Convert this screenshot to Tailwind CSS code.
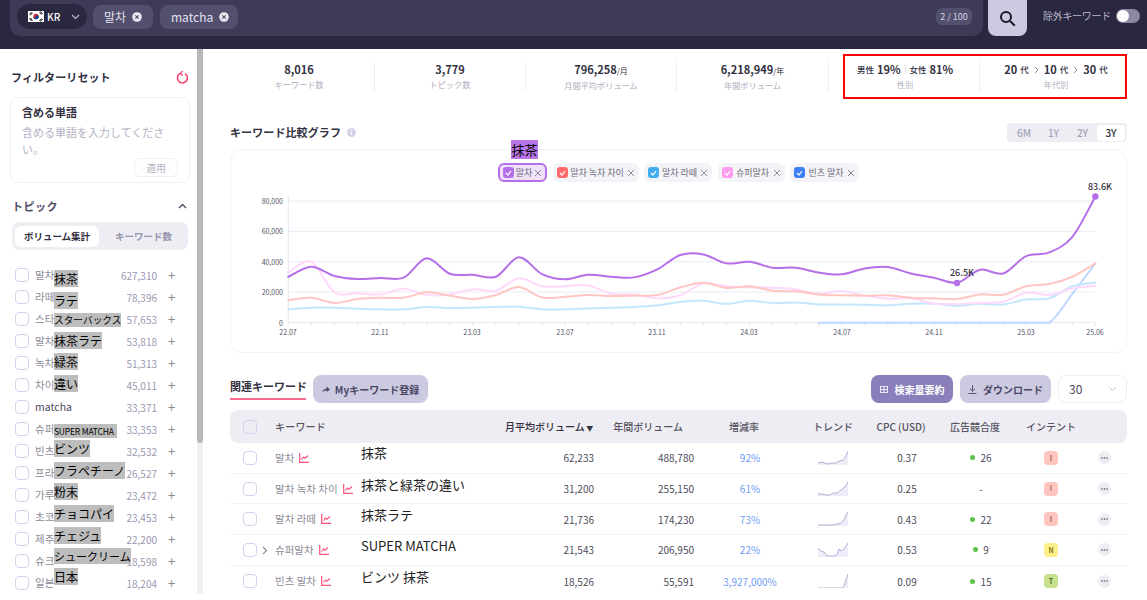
<!DOCTYPE html>
<html lang="ja">
<head>
    <meta charset="UTF-8">
    <title>キーワード比較</title>
    <script src="https://cdn.jsdelivr.net/npm/@tailwindcss/browser@4"></script>
</head>
<body class="w-[1147px] h-[600px] overflow-hidden bg-white font-['Noto_Sans_CJK_JP','Noto_Sans',sans-serif] text-[#33313f]">

<!-- top search bar -->
<header class="h-[49px] bg-[#2a2740] flex items-start pl-[10px]">
    <div class="w-[973px] h-[36px] bg-[#3e3a58] rounded-b-[10px] flex items-center pl-[7px] pr-[11px] gap-[6px] pb-[3px]">
        <div class="w-[70px] h-[25px] rounded-full bg-[#2a2740] flex items-center pl-[11px] text-white text-[10px] font-medium">
            <svg width="16" height="11" viewBox="0 0 16 11" class="mr-[2px]"><rect width="16" height="11" fill="#fff"/><circle cx="8" cy="5.500" r="2.700" fill="#cd2e3a"/><path d="M5.300 5.500a2.700 2.700 0 0 0 5.400 0c0-.7-.6-1.300-1.350-1.300S8 4.800 8 5.500 7.400 6.800 6.650 6.800 5.300 6.200 5.300 5.500z" fill="#0047a0"/><path d="M1.500 3.500l2-2.500M2.500 4.300l2-2.500M11.500 1l2 2.500M12.500 .5l2 2.500M1.500 7.500l2 2.500M2.500 7l2 2.500M11.500 10l2-2.500M12.500 10.500l2-2.500" stroke="#111" stroke-width="1"/></svg>
            <span class="ml-[1px]">KR</span>
            <svg width="9" height="6" viewBox="0 0 9 6" class="ml-[11px]" fill="none" stroke="#b9b7c8" stroke-width="1.200"><path d="M1 1l3.500 3.500L8 1"/></svg>
        </div>
        <div class="w-[60px] h-[24px] rounded-lg bg-[#534f6e] flex items-center pl-[11px] gap-[6px] text-[#e4e2ee] text-[12px]">
            <span>말차</span>
            <svg width="10" height="10" viewBox="0 0 10 10"><circle cx="5" cy="5" r="4.800" fill="#eceaf4"/><path d="M3.300 3.300l3.400 3.400M6.700 3.300l-3.400 3.400" stroke="#534f6e" stroke-width="1.200"/></svg>
        </div>
        <div class="w-[78px] h-[24px] rounded-lg bg-[#534f6e] flex items-center pl-[11px] gap-[6px] text-[#e4e2ee] text-[12px] ml-[1px]">
            <span>matcha</span>
            <svg width="10" height="10" viewBox="0 0 10 10"><circle cx="5" cy="5" r="4.800" fill="#eceaf4"/><path d="M3.300 3.300l3.400 3.400M6.700 3.300l-3.400 3.400" stroke="#534f6e" stroke-width="1.200"/></svg>
        </div>
        <div class="ml-auto w-[36px] h-[17px] rounded-md bg-[#534f6e] text-[#d6d4e2] text-[9px] flex items-center justify-center">2 / 100</div>
    </div>
    <div class="ml-[5px] w-[39px] h-[36px] bg-[#cccae0] rounded-b-lg flex items-center justify-center">
        <svg width="17" height="17" viewBox="0 0 17 17" fill="none" stroke="#1c1b26" stroke-width="2"><circle cx="7" cy="7" r="5"/><path d="M10.800 10.800l5 5"/></svg>
    </div>
    <div class="ml-[16px] h-[31px] flex items-center text-[10px] text-[#b9b7c8] whitespace-nowrap w-[67px] tracking-[-0.3px]">除外キーワード</div>
    <div class="ml-[6px] mt-[9px] w-[24px] h-[14px] rounded-full bg-[#8b88a3] flex items-center pl-[1px]">
        <div class="w-[12px] h-[12px] rounded-full bg-white"></div>
    </div>
</header>

<div class="flex h-[551px]">
    <!-- filter sidebar -->
    <aside class="w-[197px] shrink-0 pl-[10px] pr-[7px]">
        <div class="flex items-center justify-between h-[16px] mt-[20px] pl-[1px] pr-[1px]">
            <span class="text-[11px] font-bold tracking-[0.1px] whitespace-nowrap">フィルターリセット</span>
            <svg width="13" height="14" viewBox="0 0 13 14" fill="none" stroke="#ff3b66" stroke-width="1.500"><path d="M4.200 3.400a5 5 0 1 0 4.800 .2"/><path d="M6.800 .8L4.200 3.400l2.600 2" stroke-width="1.200"/></svg>
        </div>
        <div class="mt-[12px] w-[180px] h-[86px] border border-[#f0eff5] rounded-lg pt-[6px] pl-[11px] pr-[8px] relative">
            <div class="text-[11px] font-bold leading-[17px]">含める単語</div>
            <div class="text-[11px] leading-[17px] text-[#b3b1c4] mt-[3px]">含める単語を入力してください。</div>
            <div class="absolute right-[11px] bottom-[5px] w-[44px] h-[19px] border border-[#eeedf3] rounded-md text-[10px] text-[#b5b3c2] flex items-center justify-center">適用</div>
        </div>
        <div class="flex items-center justify-between mt-[15px] h-[16px] pl-[2px] pr-[3px]">
            <span class="text-[11px] font-bold text-[#4f4d66] tracking-[0.5px]">トピック</span>
            <svg width="9" height="6" viewBox="0 0 9 6" fill="none" stroke="#4f4d66" stroke-width="1.300"><path d="M1 5l3.500-3.500L8 5"/></svg>
        </div>
        <div class="mt-[8px] ml-[2px] w-[176px] h-[28px] rounded-lg bg-[#eeedf4] flex items-center pl-[3px] text-[9.500px] font-bold">
            <div class="w-[84px] h-[21px] rounded-md bg-white flex items-center justify-center">ボリューム集計</div>
            <div class="flex-1 text-center text-[#9795ab]">キーワード数</div>
        </div>

        <ul class="mt-[14px] -ml-[10px] text-[10px]">
            <li class="relative h-[22px] flex items-center pl-[15px]">
                <span class="w-[14px] h-[14px] rounded-[4px] border border-[#d5d0ec]"></span>
                <span class="ml-[6px] text-[#8d8b98] text-[10.500px]">말차</span>
                <span class="absolute right-[33px] text-[#9a98b0]">627,310</span>
                <span class="absolute left-[168px] text-[#8d8b98] text-[13px]">+</span>
                <span class="absolute left-[54px] top-[6px] bg-[#bdbdbd] text-black text-[12px] leading-[17px]">抹茶</span>
            </li>
            <li class="relative h-[22px] flex items-center pl-[15px]">
                <span class="w-[14px] h-[14px] rounded-[4px] border border-[#d5d0ec]"></span>
                <span class="ml-[6px] text-[#8d8b98] text-[10.500px]">라떼</span>
                <span class="absolute right-[33px] text-[#9a98b0]">78,396</span>
                <span class="absolute left-[168px] text-[#8d8b98] text-[13px]">+</span>
                <span class="absolute left-[54px] top-[6px] bg-[#bdbdbd] text-black text-[12px] leading-[17px]">ラテ</span>
            </li>
            <li class="relative h-[22px] flex items-center pl-[15px]">
                <span class="w-[14px] h-[14px] rounded-[4px] border border-[#d5d0ec]"></span>
                <span class="ml-[6px] text-[#8d8b98] text-[10.500px]">스타</span>
                <span class="absolute right-[33px] text-[#9a98b0]">57,653</span>
                <span class="absolute left-[168px] text-[#8d8b98] text-[13px]">+</span>
                <span class="absolute left-[54px] top-[5px] bg-[#bdbdbd] text-black text-[9.700px] leading-[14px] whitespace-nowrap">スターバックス</span>
            </li>
            <li class="relative h-[22px] flex items-center pl-[15px]">
                <span class="w-[14px] h-[14px] rounded-[4px] border border-[#d5d0ec]"></span>
                <span class="ml-[6px] text-[#8d8b98] text-[10.500px]">말차</span>
                <span class="absolute right-[33px] text-[#9a98b0]">53,818</span>
                <span class="absolute left-[168px] text-[#8d8b98] text-[13px]">+</span>
                <span class="absolute left-[54px] top-[2px] bg-[#bdbdbd] text-black text-[12px] leading-[17px] whitespace-nowrap">抹茶ラテ</span>
            </li>
            <li class="relative h-[22px] flex items-center pl-[15px]">
                <span class="w-[14px] h-[14px] rounded-[4px] border border-[#d5d0ec]"></span>
                <span class="ml-[6px] text-[#8d8b98] text-[10.500px]">녹차</span>
                <span class="absolute right-[33px] text-[#9a98b0]">51,313</span>
                <span class="absolute left-[168px] text-[#8d8b98] text-[13px]">+</span>
                <span class="absolute left-[54px] top-[1px] bg-[#bdbdbd] text-black text-[12px] leading-[17px]">緑茶</span>
            </li>
            <li class="relative h-[22px] flex items-center pl-[15px]">
                <span class="w-[14px] h-[14px] rounded-[4px] border border-[#d5d0ec]"></span>
                <span class="ml-[6px] text-[#8d8b98] text-[10.500px]">차이</span>
                <span class="absolute right-[33px] text-[#9a98b0]">45,011</span>
                <span class="absolute left-[168px] text-[#8d8b98] text-[13px]">+</span>
                <span class="absolute left-[54px] top-[1px] bg-[#bdbdbd] text-black text-[12px] leading-[17px]">違い</span>
            </li>
            <li class="relative h-[22px] flex items-center pl-[15px]">
                <span class="w-[14px] h-[14px] rounded-[4px] border border-[#d5d0ec]"></span>
                <span class="ml-[6px] text-[#4d4b5a] text-[10.500px]">matcha</span>
                <span class="absolute right-[33px] text-[#9a98b0]">33,371</span>
                <span class="absolute left-[168px] text-[#8d8b98] text-[13px]">+</span>
            </li>
            <li class="relative h-[22px] flex items-center pl-[15px]">
                <span class="w-[14px] h-[14px] rounded-[4px] border border-[#d5d0ec]"></span>
                <span class="ml-[6px] text-[#8d8b98] text-[10.500px]">슈퍼</span>
                <span class="absolute right-[33px] text-[#9a98b0]">33,353</span>
                <span class="absolute left-[168px] text-[#8d8b98] text-[13px]">+</span>
                <span class="absolute left-[54px] top-[6px] w-[63px] bg-[#bdbdbd] text-black text-[8.500px] leading-[14px] whitespace-nowrap tracking-[-0.2px]">SUPER MATCHA</span>
            </li>
            <li class="relative h-[22px] flex items-center pl-[15px]">
                <span class="w-[14px] h-[14px] rounded-[4px] border border-[#d5d0ec]"></span>
                <span class="ml-[6px] text-[#8d8b98] text-[10.500px]">빈츠</span>
                <span class="absolute right-[33px] text-[#9a98b0]">32,532</span>
                <span class="absolute left-[168px] text-[#8d8b98] text-[13px]">+</span>
                <span class="absolute left-[54px] top-[0px] bg-[#bdbdbd] text-black text-[12px] leading-[17px] whitespace-nowrap">ビンツ</span>
            </li>
            <li class="relative h-[22px] flex items-center pl-[15px]">
                <span class="w-[14px] h-[14px] rounded-[4px] border border-[#d5d0ec]"></span>
                <span class="ml-[6px] text-[#8d8b98] text-[10.500px]">프라</span>
                <span class="absolute right-[33px] text-[#9a98b0]">26,527</span>
                <span class="absolute left-[168px] text-[#8d8b98] text-[13px]">+</span>
                <span class="absolute left-[54px] top-[0px] bg-[#bdbdbd] text-black text-[12px] leading-[17px] whitespace-nowrap">フラペチーノ</span>
            </li>
            <li class="relative h-[22px] flex items-center pl-[15px]">
                <span class="w-[14px] h-[14px] rounded-[4px] border border-[#d5d0ec]"></span>
                <span class="ml-[6px] text-[#8d8b98] text-[10.500px]">가루</span>
                <span class="absolute right-[33px] text-[#9a98b0]">23,472</span>
                <span class="absolute left-[168px] text-[#8d8b98] text-[13px]">+</span>
                <span class="absolute left-[54px] -top-[1px] bg-[#bdbdbd] text-black text-[12px] leading-[17px]">粉末</span>
            </li>
            <li class="relative h-[22px] flex items-center pl-[15px]">
                <span class="w-[14px] h-[14px] rounded-[4px] border border-[#d5d0ec]"></span>
                <span class="ml-[6px] text-[#8d8b98] text-[10.500px]">초코</span>
                <span class="absolute right-[33px] text-[#9a98b0]">23,453</span>
                <span class="absolute left-[168px] text-[#8d8b98] text-[13px]">+</span>
                <span class="absolute left-[54px] -top-[1px] bg-[#bdbdbd] text-black text-[12px] leading-[17px] whitespace-nowrap">チョコパイ</span>
            </li>
            <li class="relative h-[22px] flex items-center pl-[15px]">
                <span class="w-[14px] h-[14px] rounded-[4px] border border-[#d5d0ec]"></span>
                <span class="ml-[6px] text-[#8d8b98] text-[10.500px]">제주</span>
                <span class="absolute right-[33px] text-[#9a98b0]">22,200</span>
                <span class="absolute left-[168px] text-[#8d8b98] text-[13px]">+</span>
                <span class="absolute left-[54px] -top-[1px] bg-[#bdbdbd] text-black text-[12px] leading-[17px] whitespace-nowrap">チェジュ</span>
            </li>
            <li class="relative h-[22px] flex items-center pl-[15px]">
                <span class="w-[14px] h-[14px] rounded-[4px] border border-[#d5d0ec]"></span>
                <span class="ml-[6px] text-[#8d8b98] text-[10.500px]">슈크</span>
                <span class="absolute right-[33px] text-[#9a98b0]">18,598</span>
                <span class="absolute left-[168px] text-[#8d8b98] text-[13px]">+</span>
                <span class="absolute left-[54px] -top-[2px] bg-[#bdbdbd] text-black text-[11px] leading-[16px] whitespace-nowrap">シュークリーム</span>
            </li>
            <li class="relative h-[22px] flex items-center pl-[15px]">
                <span class="w-[14px] h-[14px] rounded-[4px] border border-[#d5d0ec]"></span>
                <span class="ml-[6px] text-[#8d8b98] text-[10.500px]">일본</span>
                <span class="absolute right-[33px] text-[#9a98b0]">18,204</span>
                <span class="absolute left-[168px] text-[#8d8b98] text-[13px]">+</span>
                <span class="absolute left-[54px] -top-[4px] bg-[#bdbdbd] text-black text-[12px] leading-[17px]">日本</span>
            </li>
        </ul>
    </aside>

    <!-- sidebar scrollbar -->
    <div class="w-[6px] shrink-0 h-[545px] bg-[#f0f0f0]">
        <div class="w-[6px] h-[394px] bg-[#b8b8b8] rounded-b-[3px]"></div>
    </div>

    <main class="w-[944px] pl-[27px] pr-[20px]">
        <!-- summary numbers -->
        <div class="flex items-center mt-[5px] h-[45px] -ml-[6px]">
            <div class="w-[151px] h-[29px] border-r border-[#eeedf3] text-center flex flex-col justify-center">
                <div class="text-[11px] font-bold leading-[15px]">8,016</div>
                <div class="text-[8.200px] text-[#b0aec0] leading-[14px]">キーワード数</div>
            </div>
            <div class="w-[151px] h-[29px] border-r border-[#eeedf3] text-center flex flex-col justify-center">
                <div class="text-[11px] font-bold leading-[15px]">3,779</div>
                <div class="text-[8.200px] text-[#b0aec0] leading-[14px]">トピック数</div>
            </div>
            <div class="w-[151px] h-[29px] border-r border-[#eeedf3] text-center flex flex-col justify-center">
                <div class="text-[11px] font-bold leading-[15px]">796,258<span class="text-[8px] font-normal">/月</span></div>
                <div class="text-[8.200px] text-[#b0aec0] leading-[14px]">月間平均ボリューム</div>
            </div>
            <div class="w-[152px] h-[29px] border-r border-[#eeedf3] text-center flex flex-col justify-center">
                <div class="text-[11px] font-bold leading-[15px]">6,218,949<span class="text-[8px] font-normal">/年</span></div>
                <div class="text-[8.200px] text-[#b0aec0] leading-[14px]">年間ボリューム</div>
            </div>
            <div class="ml-[14px] w-[284px] h-[45px] border-2 border-[#f00] flex items-center">
                <div class="w-[135px] h-[29px] border-r border-[#eeedf3] pr-[14px] text-center flex flex-col justify-center">
                    <div class="flex items-center justify-center text-[11px] font-bold leading-[15px] whitespace-nowrap">
                        <span class="text-[8.500px] font-medium mr-[3px]">男性</span>19%
                        <span class="w-px h-[9px] bg-[#e4e3ec] mx-[4px]"></span>
                        <span class="text-[8.500px] font-medium mr-[3px]">女性</span>81%
                    </div>
                    <div class="text-[8.200px] text-[#b0aec0] leading-[14px]">性別</div>
                </div>
                <div class="flex-1 h-[29px] pl-[7px] text-center flex flex-col justify-center">
                    <div class="flex items-center justify-center text-[11px] font-bold leading-[15px] whitespace-nowrap">
                        20<span class="text-[8.500px] font-medium ml-[3px]">代</span>
                        <svg width="5" height="8" viewBox="0 0 5 8" fill="none" stroke="#8d8b98" class="mx-[5px]"><path d="M1 1l3 3-3 3"/></svg>
                        10<span class="text-[8.500px] font-medium ml-[3px]">代</span>
                        <svg width="5" height="8" viewBox="0 0 5 8" fill="none" stroke="#8d8b98" class="mx-[5px]"><path d="M1 1l3 3-3 3"/></svg>
                        30<span class="text-[8.500px] font-medium ml-[3px]">代</span>
                    </div>
                    <div class="text-[8.200px] text-[#b0aec0] leading-[14px]">年代別</div>
                </div>
            </div>
        </div>

        <!-- graph title and range -->
        <div class="flex items-center justify-between mt-[24px] h-[19px]">
            <div class="flex items-center gap-[6px]">
                <span class="text-[11px] font-bold tracking-[0.1px]">キーワード比較グラフ</span>
                <svg width="9" height="9" viewBox="0 0 9 9"><circle cx="4.500" cy="4.500" r="4.500" fill="#d5d3e8"/><path d="M4.500 4v2.800M4.500 2v1" stroke="#fff" stroke-width="1"/></svg>
            </div>
            <div class="w-[120px] h-[19px] rounded bg-[#eeedf4] flex items-center text-[10px] font-medium text-[#a3a1b5] pl-[2px]">
                <span class="w-[30px] text-center">6M</span>
                <span class="w-[29px] text-center">1Y</span>
                <span class="w-[29px] text-center">2Y</span>
                <span class="w-[28px] h-[16px] leading-[16px] rounded bg-white text-center text-[#33313f]">3Y</span>
            </div>
        </div>

        <!-- graph card -->
        <div class="mt-[7px] w-[897px] h-[204px] border border-[#f3f2f7] rounded-xl pt-[13px]">
            <div class="flex justify-center gap-[5.500px] h-[19px] text-[9px] text-[#6d6b78] whitespace-nowrap">
                <div class="relative w-[49px] h-[19px] px-[3px] border-2 border-[#b56fe8] bg-[#f0e2fb] rounded-md flex items-center justify-between">
                    <span class="w-[11px] h-[11px] rounded-[3px] bg-[#b56fe8] flex items-center justify-center"><svg width="7" height="6" viewBox="0 0 7 6" fill="none" stroke="#fff" stroke-width="1.200"><path d="M1 3l2 2 3-4"/></svg></span>
                    <span>말차</span>
                    <svg width="8" height="8" viewBox="0 0 8 8" fill="none" stroke="#8d8b98"><path d="M1 1l6 6M7 1L1 7"/></svg>
                    <span class="absolute left-[11px] -top-[25px] w-[27px] h-[19px] bg-[#b875e8] text-black text-[13px] leading-[19px] text-center">抹茶</span>
                </div>
                <div class="w-[86px] h-[19px] px-[4px] bg-[#f4f4f8] rounded-md flex items-center justify-between">
                    <span class="w-[11px] h-[11px] rounded-[3px] bg-[#ff6b6b] flex items-center justify-center"><svg width="7" height="6" viewBox="0 0 7 6" fill="none" stroke="#fff" stroke-width="1.200"><path d="M1 3l2 2 3-4"/></svg></span>
                    <span>말차 녹차 차이</span>
                    <svg width="8" height="8" viewBox="0 0 8 8" fill="none" stroke="#8d8b98"><path d="M1 1l6 6M7 1L1 7"/></svg>
                </div>
                <div class="w-[68px] h-[19px] px-[4px] bg-[#f4f4f8] rounded-md flex items-center justify-between">
                    <span class="w-[11px] h-[11px] rounded-[3px] bg-[#42aef0] flex items-center justify-center"><svg width="7" height="6" viewBox="0 0 7 6" fill="none" stroke="#fff" stroke-width="1.200"><path d="M1 3l2 2 3-4"/></svg></span>
                    <span>말차 라떼</span>
                    <svg width="8" height="8" viewBox="0 0 8 8" fill="none" stroke="#8d8b98"><path d="M1 1l6 6M7 1L1 7"/></svg>
                </div>
                <div class="w-[67px] h-[19px] px-[4px] bg-[#f4f4f8] rounded-md flex items-center justify-between">
                    <span class="w-[11px] h-[11px] rounded-[3px] bg-[#ff9bf0] flex items-center justify-center"><svg width="7" height="6" viewBox="0 0 7 6" fill="none" stroke="#fff" stroke-width="1.200"><path d="M1 3l2 2 3-4"/></svg></span>
                    <span>슈퍼말차</span>
                    <svg width="8" height="8" viewBox="0 0 8 8" fill="none" stroke="#8d8b98"><path d="M1 1l6 6M7 1L1 7"/></svg>
                </div>
                <div class="w-[69px] h-[19px] px-[4px] bg-[#f4f4f8] rounded-md flex items-center justify-between">
                    <span class="w-[11px] h-[11px] rounded-[3px] bg-[#3f7ff5] flex items-center justify-center"><svg width="7" height="6" viewBox="0 0 7 6" fill="none" stroke="#fff" stroke-width="1.200"><path d="M1 3l2 2 3-4"/></svg></span>
                    <span>빈츠 말차</span>
                    <svg width="8" height="8" viewBox="0 0 8 8" fill="none" stroke="#8d8b98"><path d="M1 1l6 6M7 1L1 7"/></svg>
                </div>
            </div>
            <svg id="chart" width="895" height="170" viewBox="231 182 895 170" class="block overflow-visible" font-size="7" fill="#55535f">
                <g stroke="#eceaf4" stroke-width="1">
                    <path d="M288 201H1095M288 231.300H1095M288 261.700H1095M288 292H1095"/>
                    <path d="M288.300 196V323M288 322.700H1095" stroke="#e6e5f3"/>
                </g>
                <g text-anchor="end">
                    <text x="283" y="204">80,000</text>
                    <text x="283" y="234">60,000</text>
                    <text x="283" y="265">40,000</text>
                    <text x="283" y="295">20,000</text>
                    <text x="283" y="326">0</text>
                </g>
                <g text-anchor="middle">
                    <text x="288" y="335">22.07</text>
                    <text x="380" y="335">22.11</text>
                    <text x="472" y="335">23.03</text>
                    <text x="565" y="335">23.07</text>
                    <text x="657" y="335">23.11</text>
                    <text x="749" y="335">24.03</text>
                    <text x="842" y="335">24.07</text>
                    <text x="934" y="335">24.11</text>
                    <text x="1026" y="335">25.03</text>
                    <text x="1095" y="335">25.06</text>
                </g>
                <g id="ticks" stroke="#e6e5f3"></g>
                <g id="lines" fill="none" stroke-linecap="round"></g>
                <circle cx="957" cy="283" r="3.200" fill="#b56fe8"/>
                <circle cx="1095.300" cy="196.500" r="3.200" fill="#b56fe8"/>
                <text x="962" y="276" text-anchor="middle" font-size="9" font-weight="500" fill="#33313f">26.5K</text>
                <text x="1100" y="190" text-anchor="middle" font-size="9" font-weight="500" fill="#33313f">83.6K</text>
            </svg>
        </div>

        <!-- related keywords toolbar -->
        <div class="flex items-start mt-[22px] h-[28px]">
            <div class="w-[76px] h-[25px] border-b-2 border-[#ff6b8f] text-[11px] font-bold leading-[22px] whitespace-nowrap">関連キーワード</div>
            <div class="ml-[7px] w-[115px] h-[28px] rounded-lg bg-[#cccae0] flex items-center justify-center gap-[5px] text-[10px] font-bold text-[#4a4766]">
                <svg width="8" height="7" viewBox="0 0 8 7" fill="#4a4766"><path d="M0 7c.5-3 2-4.300 4.500-4.300V.5L8 3.500 4.500 6V4.200C2.500 4.200 1 5 0 7z"/></svg>
                <span>Myキーワード登録</span>
            </div>
            <div class="ml-auto w-[82px] h-[28px] rounded-lg bg-[#8a7fbb] flex items-center justify-center gap-[7px] text-[10px] font-bold text-white">
                <svg width="8" height="7" viewBox="0 0 8 7" fill="none" stroke="#fff" stroke-width=".8"><rect x=".5" y=".5" width="7" height="6"/><path d="M.5 3.500h7M4 .5v6"/></svg>
                <span>検索量要約</span>
            </div>
            <div class="ml-[7px] w-[91px] h-[28px] rounded-lg bg-[#cccae0] flex items-center justify-center gap-[6px] text-[10px] font-bold text-[#4a4766]">
                <svg width="9" height="9" viewBox="0 0 9 9" fill="none" stroke="#4a4766" stroke-width=".9"><path d="M4.500 0v6M2 3.800l2.500 2.400L7 3.800M.5 8.500h8"/></svg>
                <span>ダウンロード</span>
            </div>
            <div class="ml-[7px] w-[69px] h-[28px] rounded-lg border border-[#eeedf6] flex items-center justify-between pl-[10px] pr-[9px] text-[12px] text-[#4d4b5a]">
                <span>30</span>
                <svg width="9" height="6" viewBox="0 0 9 6" fill="none" stroke="#c9c7d8"><path d="M1 1l3.500 3.500L8 1"/></svg>
            </div>
        </div>

        <!-- keyword table -->
        <div class="mt-[7px] w-[897px] text-[10px] text-[#4d4b5a]">
            <div class="h-[33px] rounded-lg bg-[#eeedf4] grid grid-cols-[45px_230px_90px_100px_110px_56px_80px_68px_84px_34px] items-center font-medium text-[#55535f]">
                <span class="ml-[13px] w-[14px] h-[14px] rounded-[4px] border border-[#d5d0ec]"></span>
                <span class="tracking-[0.2px]">キーワード</span>
                <span class="text-right pr-[3px] text-[#33313f] whitespace-nowrap">月平均ボリューム<span class="text-[7px]"> ▼</span></span>
                <span class="text-right pr-[12px] whitespace-nowrap">年間ボリューム</span>
                <span class="text-center pr-[12px]">増減率</span>
                <span class="text-center">トレンド</span>
                <span class="text-center">CPC (USD)</span>
                <span class="text-center whitespace-nowrap">広告競合度</span>
                <span class="text-center">インテント</span>
                <span></span>
            </div>

            <div class="h-[30.700px] border-b border-[#f3f2f7] grid grid-cols-[45px_230px_90px_100px_110px_56px_80px_68px_84px_34px] items-center relative">
                <span class="ml-[13px] w-[14px] h-[14px] rounded-[4px] border border-[#d5d0ec]"></span>
                <span class="flex items-center gap-[5px] text-[#8d8b98] text-[10.500px]">말차
                    <svg width="10" height="10" viewBox="0 0 10 10" fill="none" stroke="#ff4f7b" stroke-width="1.200"><path d="M.7 0v9.300H10M2.500 6.500l2-2.500 1.500 1.300L9 2.500"/></svg>
                </span>
                <span class="text-right pr-[1px]">62,233</span>
                <span class="text-right pr-[1px]">488,780</span>
                <span class="text-center text-[#6f9cf7]">92%</span>
                <svg class="justify-self-center" width="30" height="14" viewBox="0 0 30 14"><path d="M0 12 3 11 7 12 10 13 14 12 18 12 21 10 25 9 28 5 30 0V14H0Z" fill="#efebf8"/><path d="M0 12 3 11 7 12 10 13 14 12 18 12 21 10 25 9 28 5 30 0" fill="none" stroke="#9c8fc4" stroke-width=".7"/></svg>
                <span class="text-center pl-[12px]">0.37</span>
                <span class="flex items-center justify-center gap-[5px] pl-[12px]"><i class="w-[5px] h-[5px] rounded-full bg-[#5cc24a]"></i>26</span>
                <span class="justify-self-center w-[14px] h-[14px] rounded bg-[#ffc6c0] text-[#a8615c] text-[7px] font-bold flex items-center justify-center">I</span>
                <span class="ml-[5px] w-[13px] h-[13px] rounded-full bg-[#eeedf4] text-[#4d4b5a] flex items-center justify-center"><svg width="7" height="2" viewBox="0 0 7 2" fill="#4d4b5a"><circle cx="1" cy="1" r=".8"/><circle cx="3.500" cy="1" r=".8"/><circle cx="6" cy="1" r=".8"/></svg></span>
                <span class="absolute left-[131px] top-[0px] text-[13px] leading-[20px] text-[#222] whitespace-nowrap">抹茶</span>
            </div>
            <div class="h-[30.700px] border-b border-[#f3f2f7] grid grid-cols-[45px_230px_90px_100px_110px_56px_80px_68px_84px_34px] items-center relative">
                <span class="ml-[13px] w-[14px] h-[14px] rounded-[4px] border border-[#d5d0ec]"></span>
                <span class="flex items-center gap-[5px] text-[#8d8b98] text-[10.500px]">말차 녹차 차이
                    <svg width="10" height="10" viewBox="0 0 10 10" fill="none" stroke="#ff4f7b" stroke-width="1.200"><path d="M.7 0v9.300H10M2.500 6.500l2-2.500 1.500 1.300L9 2.500"/></svg>
                </span>
                <span class="text-right pr-[1px]">31,200</span>
                <span class="text-right pr-[1px]">255,150</span>
                <span class="text-center text-[#6f9cf7]">61%</span>
                <svg class="justify-self-center" width="30" height="14" viewBox="0 0 30 14"><path d="M0 12 4 12 8 13 12 13 15 11 19 11 23 8 27 5 30 0V14H0Z" fill="#efebf8"/><path d="M0 12 4 12 8 13 12 13 15 11 19 11 23 8 27 5 30 0" fill="none" stroke="#9c8fc4" stroke-width=".7"/></svg>
                <span class="text-center pl-[12px]">0.25</span>
                <span class="text-center pl-[12px]">-</span>
                <span class="justify-self-center w-[14px] h-[14px] rounded bg-[#ffc6c0] text-[#a8615c] text-[7px] font-bold flex items-center justify-center">I</span>
                <span class="ml-[5px] w-[13px] h-[13px] rounded-full bg-[#eeedf4] flex items-center justify-center"><svg width="7" height="2" viewBox="0 0 7 2" fill="#4d4b5a"><circle cx="1" cy="1" r=".8"/><circle cx="3.500" cy="1" r=".8"/><circle cx="6" cy="1" r=".8"/></svg></span>
                <span class="absolute left-[131px] top-[1px] text-[13px] leading-[20px] text-[#222] whitespace-nowrap">抹茶と緑茶の違い</span>
            </div>
            <div class="h-[30.700px] border-b border-[#f3f2f7] grid grid-cols-[45px_230px_90px_100px_110px_56px_80px_68px_84px_34px] items-center relative">
                <span class="ml-[13px] w-[14px] h-[14px] rounded-[4px] border border-[#d5d0ec]"></span>
                <span class="flex items-center gap-[5px] text-[#8d8b98] text-[10.500px]">말차 라떼
                    <svg width="10" height="10" viewBox="0 0 10 10" fill="none" stroke="#ff4f7b" stroke-width="1.200"><path d="M.7 0v9.300H10M2.500 6.500l2-2.500 1.500 1.300L9 2.500"/></svg>
                </span>
                <span class="text-right pr-[1px]">21,736</span>
                <span class="text-right pr-[1px]">174,230</span>
                <span class="text-center text-[#6f9cf7]">73%</span>
                <svg class="justify-self-center" width="30" height="14" viewBox="0 0 30 14"><path d="M0 13 8 13 14 13 20 12 23 11 26 8 28 3 30 0V14H0Z" fill="#efebf8"/><path d="M0 13 8 13 14 13 20 12 23 11 26 8 28 3 30 0" fill="none" stroke="#9c8fc4" stroke-width=".7"/></svg>
                <span class="text-center pl-[12px]">0.43</span>
                <span class="flex items-center justify-center gap-[5px] pl-[12px]"><i class="w-[5px] h-[5px] rounded-full bg-[#5cc24a]"></i>22</span>
                <span class="justify-self-center w-[14px] h-[14px] rounded bg-[#ffc6c0] text-[#a8615c] text-[7px] font-bold flex items-center justify-center">I</span>
                <span class="ml-[5px] w-[13px] h-[13px] rounded-full bg-[#eeedf4] flex items-center justify-center"><svg width="7" height="2" viewBox="0 0 7 2" fill="#4d4b5a"><circle cx="1" cy="1" r=".8"/><circle cx="3.500" cy="1" r=".8"/><circle cx="6" cy="1" r=".8"/></svg></span>
                <span class="absolute left-[131px] top-[1px] text-[13px] leading-[20px] text-[#222] whitespace-nowrap">抹茶ラテ</span>
            </div>
            <div class="h-[30.700px] border-b border-[#f3f2f7] grid grid-cols-[45px_230px_90px_100px_110px_56px_80px_68px_84px_34px] items-center relative">
                <span class="ml-[13px] w-[14px] h-[14px] rounded-[4px] border border-[#d5d0ec]"></span>
                <span class="flex items-center gap-[5px] text-[#8d8b98] text-[10.500px]">슈퍼말차
                    <svg width="10" height="10" viewBox="0 0 10 10" fill="none" stroke="#ff4f7b" stroke-width="1.200"><path d="M.7 0v9.300H10M2.500 6.500l2-2.500 1.500 1.300L9 2.500"/></svg>
                </span>
                <span class="text-right pr-[1px]">21,543</span>
                <span class="text-right pr-[1px]">206,950</span>
                <span class="text-center text-[#6f9cf7]">22%</span>
                <svg class="justify-self-center" width="30" height="14" viewBox="0 0 30 14"><path d="M0 5 3 8 6 9 8 12 11 13 16 13 19 12 21 6 23 8 26 6 30 0V14H0Z" fill="#efebf8"/><path d="M0 5 3 8 6 9 8 12 11 13 16 13 19 12 21 6 23 8 26 6 30 0" fill="none" stroke="#9c8fc4" stroke-width=".7"/></svg>
                <span class="text-center pl-[12px]">0.53</span>
                <span class="flex items-center justify-center gap-[5px] pl-[12px]"><i class="w-[5px] h-[5px] rounded-full bg-[#5cc24a]"></i>9</span>
                <span class="justify-self-center w-[14px] h-[14px] rounded bg-[#fdf08a] text-[#8a7a20] text-[7px] font-bold flex items-center justify-center">N</span>
                <span class="ml-[5px] w-[13px] h-[13px] rounded-full bg-[#eeedf4] flex items-center justify-center"><svg width="7" height="2" viewBox="0 0 7 2" fill="#4d4b5a"><circle cx="1" cy="1" r=".8"/><circle cx="3.500" cy="1" r=".8"/><circle cx="6" cy="1" r=".8"/></svg></span>
                <svg class="absolute left-[32px] top-[11px]" width="6" height="9" viewBox="0 0 6 9" fill="none" stroke="#8d8b98" stroke-width="1.100"><path d="M1 1l3.500 3.500L1 8"/></svg>
                <span class="absolute left-[131px] top-[1px] text-[13px] leading-[20px] text-[#222] whitespace-nowrap">SUPER MATCHA</span>
            </div>
            <div class="h-[30.700px] grid grid-cols-[45px_230px_90px_100px_110px_56px_80px_68px_84px_34px] items-center relative">
                <span class="ml-[13px] w-[14px] h-[14px] rounded-[4px] border border-[#d5d0ec]"></span>
                <span class="flex items-center gap-[5px] text-[#8d8b98] text-[10.500px]">빈츠 말차
                    <svg width="10" height="10" viewBox="0 0 10 10" fill="none" stroke="#ff4f7b" stroke-width="1.200"><path d="M.7 0v9.300H10M2.500 6.500l2-2.500 1.500 1.300L9 2.500"/></svg>
                </span>
                <span class="text-right pr-[1px]">18,526</span>
                <span class="text-right pr-[1px]">55,591</span>
                <span class="text-center text-[#6f9cf7]">3,927,000%</span>
                <svg class="justify-self-center" width="30" height="14" viewBox="0 0 30 14"><path d="M0 14 24 14 26 12 28 6 30 0V14H0Z" fill="#efebf8"/><path d="M0 14 24 14 26 12 28 6 30 0" fill="none" stroke="#9c8fc4" stroke-width=".7"/></svg>
                <span class="text-center pl-[12px]">0.09</span>
                <span class="flex items-center justify-center gap-[5px] pl-[12px]"><i class="w-[5px] h-[5px] rounded-full bg-[#5cc24a]"></i>15</span>
                <span class="justify-self-center w-[14px] h-[14px] rounded bg-[#c5e08e] text-[#55702a] text-[7px] font-bold flex items-center justify-center">T</span>
                <span class="ml-[5px] w-[13px] h-[13px] rounded-full bg-[#eeedf4] flex items-center justify-center"><svg width="7" height="2" viewBox="0 0 7 2" fill="#4d4b5a"><circle cx="1" cy="1" r=".8"/><circle cx="3.500" cy="1" r=".8"/><circle cx="6" cy="1" r=".8"/></svg></span>
                <span class="absolute left-[131px] top-[1px] text-[13px] leading-[20px] text-[#222] whitespace-nowrap">ビンツ 抹茶</span>
            </div>
        </div>
    </main>
</div>

<script>
    // monthly values in thousands, read off the graph
    const series = [
        { color: '#bcd6ff', start: 23, data: [0,0,0,0,0,0,0,0,0,0,0,19,39] },
        { color: '#c2e7fb', start: 0, data: [8.8,9.9,9.9,9.2,8.8,8.8,10.3,9.6,9.9,10.3,10.5,8.8,8.8,9.4,9.9,10.3,11.4,13.6,14.5,12.5,14.5,12.9,13.2,12,12,11.8,11.4,12.5,12.5,11.2,12.5,12,15.3,16,24,26.5] },
        { color: '#ffd9fb', start: 0, data: [33,40,20,19.3,18.6,22.4,18.2,18.6,21.9,21,29.2,24,24,24.5,19,18.5,16,18,25.9,24,23.2,23,22,19,20.8,17.8,15.8,16,12.7,12.3,13,13.8,19.7,18.2,22.6,24.3] },
        { color: '#ffc6c2', start: 0, data: [14.9,16.4,13,15.6,16.4,16.4,20,17.8,15.6,18.2,23.5,16.6,17,18.2,17.5,17.8,18.2,23.2,26.3,22.8,24,21,20.6,18.6,18,17.8,18,16.4,16,15.6,18.6,18.4,24,25.4,30.2,39] },
        { color: '#b56fe8', start: 0, data: [30.2,36.8,30.7,28.7,29.4,29.6,42.3,32.2,31.5,30.2,43,32,28.5,31.5,30.2,29.8,35,44.5,44.9,39,40,36.2,36.2,33,31.8,35.7,36.6,32.4,29.6,26.3,34.8,32.4,43.8,46.2,56.5,83] }
    ];
    const toX = i => 288.3 + 23.06 * i;
    const toY = v => 322.7 - v * 1.521;

    // control points are kept above the zero line so the curve can't dip under it
    function smoothPath(pts) {
        let d = `M${pts[0][0]} ${pts[0][1]}`;
        for (let i = 0; i < pts.length - 1; i++) {
            const p0 = pts[i - 1] || pts[i], p1 = pts[i], p2 = pts[i + 1], p3 = pts[i + 2] || p2;
            const c1x = p1[0] + (p2[0] - p0[0]) / 6, c1y = Math.min(p1[1] + (p2[1] - p0[1]) / 6, 322.7);
            const c2x = p2[0] - (p3[0] - p1[0]) / 6, c2y = Math.min(p2[1] - (p3[1] - p1[1]) / 6, 322.7);
            d += `C${c1x} ${c1y} ${c2x} ${c2y} ${p2[0]} ${p2[1]}`;
        }
        return d;
    }

    const ns = 'http://www.w3.org/2000/svg';
    const lines = document.getElementById('lines');
    series.forEach(s => {
        const path = document.createElementNS(ns, 'path');
        path.setAttribute('d', smoothPath(s.data.map((v, i) => [toX(i + s.start), toY(v)])));
        path.setAttribute('stroke', s.color);
        path.setAttribute('stroke-width', '2');
        lines.appendChild(path);
    });

    const ticks = document.getElementById('ticks');
    for (let i = 0; i < 36; i++) {
        const t = document.createElementNS(ns, 'path');
        t.setAttribute('d', `M${toX(i)} 323V326`);
        ticks.appendChild(t);
    }
</script>
</body>
</html>
